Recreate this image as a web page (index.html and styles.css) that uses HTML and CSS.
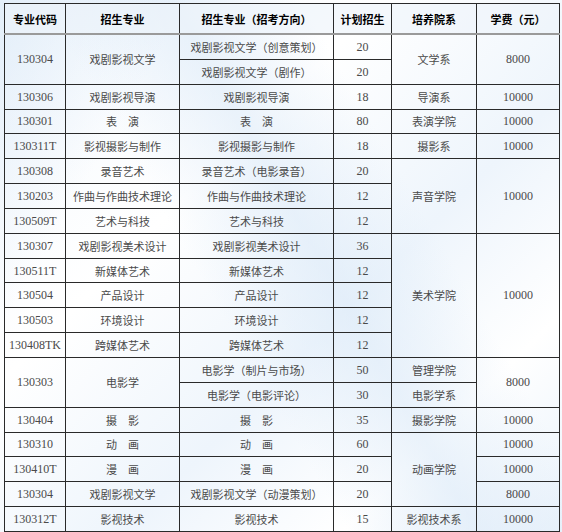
FILE: index.html
```html
<!DOCTYPE html>
<html lang="zh">
<head>
<meta charset="utf-8">
<title>招生专业</title>
<link rel="stylesheet" href="styles.css">
</head>
<body>
<div class="page">
<table class="plan">
<colgroup>
<col class="c1"><col class="c2"><col class="c3"><col class="c4"><col class="c5"><col class="c6">
</colgroup>
<thead>
<tr><th>专业代码</th><th>招生专业</th><th>招生专业（招考方向）</th><th>计划招生</th><th>培养院系</th><th>学费（元）</th></tr>
</thead>
<tbody>
<tr><td class="num" rowspan="2">130304</td><td rowspan="2">戏剧影视文学</td><td>戏剧影视文学（创意策划）</td><td class="num">20</td><td rowspan="2">文学系</td><td class="num" rowspan="2">8000</td></tr>
<tr><td>戏剧影视文学（剧作）</td><td class="num">20</td></tr>
<tr><td class="num">130306</td><td>戏剧影视导演</td><td>戏剧影视导演</td><td class="num">18</td><td>导演系</td><td class="num">10000</td></tr>
<tr><td class="num">130301</td><td>表　演</td><td>表　演</td><td class="num">80</td><td>表演学院</td><td class="num">10000</td></tr>
<tr><td class="num">130311T</td><td>影视摄影与制作</td><td>影视摄影与制作</td><td class="num">18</td><td>摄影系</td><td class="num">10000</td></tr>
<tr><td class="num">130308</td><td>录音艺术</td><td>录音艺术（电影录音）</td><td class="num">20</td><td rowspan="3">声音学院</td><td class="num" rowspan="3">10000</td></tr>
<tr><td class="num">130203</td><td>作曲与作曲技术理论</td><td>作曲与作曲技术理论</td><td class="num">12</td></tr>
<tr><td class="num">130509T</td><td>艺术与科技</td><td>艺术与科技</td><td class="num">12</td></tr>
<tr><td class="num">130307</td><td>戏剧影视美术设计</td><td>戏剧影视美术设计</td><td class="num">36</td><td rowspan="5">美术学院</td><td class="num" rowspan="5">10000</td></tr>
<tr><td class="num">130511T</td><td>新媒体艺术</td><td>新媒体艺术</td><td class="num">12</td></tr>
<tr><td class="num">130504</td><td>产品设计</td><td>产品设计</td><td class="num">12</td></tr>
<tr><td class="num">130503</td><td>环境设计</td><td>环境设计</td><td class="num">12</td></tr>
<tr><td class="num">130408TK</td><td>跨媒体艺术</td><td>跨媒体艺术</td><td class="num">12</td></tr>
<tr><td class="num" rowspan="2">130303</td><td rowspan="2">电影学</td><td>电影学（制片与市场）</td><td class="num">50</td><td>管理学院</td><td class="num" rowspan="2">8000</td></tr>
<tr><td>电影学（电影评论）</td><td class="num">30</td><td>电影学系</td></tr>
<tr><td class="num">130404</td><td>摄　影</td><td>摄　影</td><td class="num">35</td><td>摄影学院</td><td class="num">10000</td></tr>
<tr><td class="num">130310</td><td>动　画</td><td>动　画</td><td class="num">60</td><td rowspan="3">动画学院</td><td class="num">10000</td></tr>
<tr><td class="num">130410T</td><td>漫　画</td><td>漫　画</td><td class="num">20</td><td class="num">10000</td></tr>
<tr><td class="num">130304</td><td>戏剧影视文学</td><td>戏剧影视文学（动漫策划）</td><td class="num">20</td><td class="num">8000</td></tr>
<tr><td class="num">130312T</td><td>影视技术</td><td>影视技术</td><td class="num">15</td><td>影视技术系</td><td class="num">10000</td></tr>
</tbody>
</table>
</div>
</body>
</html>
```

FILE: styles.css
```css
html, body {
  margin: 0;
  padding: 0;
}
body {
  width: 562px;
  height: 532px;
  overflow: hidden;
  background:
    linear-gradient(120deg, rgba(214,230,246,0.55) 0%, rgba(255,255,255,0) 22%),
    linear-gradient(60deg, rgba(255,255,255,0) 40%, rgba(220,234,248,0.6) 55%, rgba(255,255,255,0) 70%),
    linear-gradient(135deg, #f3f8fd 0%, #ffffff 35%, #eef5fc 60%, #ffffff 80%, #e9f2fb 100%);
  font-family: "Liberation Serif", "Noto Sans CJK SC", serif;
}
.page {
  padding: 3px 0 0 4px;
}
.plan {
  border-collapse: collapse;
  table-layout: fixed;
  width: 555px;
}
.c1 { width: 61px; }
.c2 { width: 114px; }
.c3 { width: 154px; }
.c4 { width: 58px; }
.c5 { width: 85px; }
.c6 { width: 83px; }
.plan th {
  height: 29px;
  padding: 0;
  font-family: "Noto Sans CJK SC", sans-serif;
  font-weight: 700;
  font-size: 11px;
  color: #000;
  text-align: center;
  vertical-align: middle;
  border: 1px solid #2a2a2a;
  border-bottom: 2px solid #9a9a9a;
  background: rgba(236,243,250,0.6);
}
.plan td {
  height: 23.85px;
  padding: 0;
  font-family: "Noto Sans CJK SC", sans-serif;
  font-weight: 400;
  font-size: 11px;
  color: #4a4a4a;
  text-align: center;
  vertical-align: middle;
  border: 1px solid #2a2a2a;
  white-space: nowrap;
  line-height: 14px;
}
.plan td.num {
  font-family: "Liberation Serif", serif;
  font-size: 12px;
  color: #4a4a4a;
}
```
